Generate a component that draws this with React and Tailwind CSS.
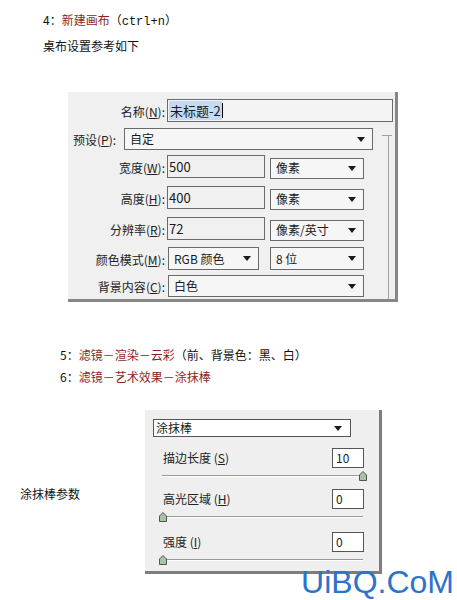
import React from 'react';

const cjk = { fontFamily: '"Noto Sans CJK SC", "Liberation Sans", sans-serif' };

const Arrow = () => (
  <svg width="8" height="5" viewBox="0 0 8 5" className="shrink-0">
    <path d="M0 0 H8 L4 5 Z" fill="#1a1a1a" />
  </svg>
);

const Select = ({ value, className }) => (
  <div className={`h-[21px] flex items-center justify-between border border-[#6a6a6a] bg-[#f6f6f6] pl-[5px] pr-[7px] text-[12px] text-[#1a1a1a] ${className}`}>
    <span>{value}</span>
    <Arrow />
  </div>
);

const Label = ({ text, k }) => (
  <span className="text-[12px] leading-[14px] text-[#222] relative top-[-1px]">
    {text}(<span className="underline">{k}</span>):
  </span>
);

const Thumb = () => (
  <svg width="8" height="10" viewBox="0 0 8 10">
    <path d="M4 0.5 L7.5 4 V9.5 H0.5 V4 Z" fill="#a9c2a9" stroke="#4a5a4a" strokeWidth="1" />
  </svg>
);

const Slider = ({ right, className }) => (
  <div className={`relative h-[10px] ml-[17px] w-[201px] ${className}`}>
    <div className="absolute left-0 right-0 top-[4px] h-[1px] bg-[#9a9a9a]" />
    <div className="absolute left-0 right-0 top-[5px] h-[1px] bg-white" />
    <div className={`absolute top-0 ${right ? 'right-[-4px]' : 'left-[-3px]'}`}>
      <Thumb />
    </div>
  </div>
);

const ParamRow = ({ label, k, value, className }) => (
  <div className={`flex items-center h-[20px] pl-[18px] ${className}`}>
    <span className="w-[169px] text-[12px] text-[#222]">
      {label} (<span className="underline">{k}</span>)
    </span>
    <div className="w-[32px] h-[20px] border border-[#555] bg-white pl-[3px] text-[12px] leading-[18px] text-[#222]">
      {value}
    </div>
  </div>
);

export default function App() {
  return (
    <div className="relative w-[457px] h-[600px] bg-white overflow-hidden" style={cjk}>
      <div className="pt-[8px] pl-[43px] text-[12px] leading-[24px] text-[#111]">
        <div>
          4：<span className="text-[#8e1f1f]">新建画布</span>（
          <span style={{ fontFamily: '"Liberation Mono", monospace' }}>ctrl+n</span>）
        </div>
        <div>桌布设置参考如下</div>
      </div>

      <div className="relative ml-[68px] mt-[34px] w-[330px] h-[210px] bg-[#f0f0f0] border-r-[3px] border-b-[3px] border-[#878787] pt-[7px]">
        <div className="absolute left-[320px] top-[43px] bottom-0 w-[1px] bg-[#a0a0a0]" />
        <div className="absolute left-[314px] top-[43px] w-[10px] h-[1px] bg-[#a0a0a0]" />

        <div className="flex items-center h-[23px]">
          <div className="w-[97px] text-right"><Label text="名称" k="N" /></div>
          <div className="ml-[2px] w-[226px] h-[23px] border border-[#6a6a6a] bg-[#f4f4f4] flex items-center pl-[1px] text-[13px] text-[#1a1a1a]">
            <span className="bg-[#c5dbf2] px-[1px]">未标题-2</span>
            <span className="w-[1px] h-[15px] bg-black" />
          </div>
        </div>

        <div className="flex items-center h-[22px] mt-[6px] pl-[5px]">
          <div className="w-[51px]"><Label text="预设" k="P" /></div>
          <Select value="自定" className="w-[249px] h-[22px]" />
        </div>

        <div className="flex items-center h-[23px] mt-[5px]">
          <div className="w-[97px] text-right"><Label text="宽度" k="W" /></div>
          <div className="ml-[2px] w-[98px] h-[23px] border border-[#6a6a6a] bg-[#f0f0f0] pl-[1px] text-[13px] leading-[21px] text-[#1a1a1a]">500</div>
          <Select value="像素" className="ml-[5px] w-[94px] mt-[3px]" />
        </div>

        <div className="flex items-center h-[23px] mt-[8px]">
          <div className="w-[97px] text-right"><Label text="高度" k="H" /></div>
          <div className="ml-[2px] w-[98px] h-[23px] border border-[#6a6a6a] bg-[#f0f0f0] pl-[1px] text-[13px] leading-[21px] text-[#1a1a1a]">400</div>
          <Select value="像素" className="ml-[5px] w-[94px] mt-[3px]" />
        </div>

        <div className="flex items-center h-[23px] mt-[8px]">
          <div className="w-[97px] text-right"><Label text="分辨率" k="R" /></div>
          <div className="ml-[2px] w-[98px] h-[23px] border border-[#6a6a6a] bg-[#f0f0f0] pl-[1px] text-[13px] leading-[21px] text-[#1a1a1a]">72</div>
          <Select value="像素/英寸" className="ml-[5px] w-[94px] mt-[3px]" />
        </div>

        <div className="flex items-center h-[23px] mt-[7px]">
          <div className="w-[97px] text-right"><Label text="颜色模式" k="M" /></div>
          <Select value="RGB 颜色" className="ml-[3px] w-[91px] h-[23px]" />
          <Select value="8 位" className="ml-[11px] w-[94px] h-[23px]" />
        </div>

        <div className="flex items-center h-[22px] mt-[5px]">
          <div className="w-[97px] text-right"><Label text="背景内容" k="C" /></div>
          <Select value="白色" className="ml-[3px] w-[196px] h-[22px]" />
        </div>
      </div>

      <div className="mt-[42px] pl-[60px] text-[12px] leading-[22px] text-[#111]">
        <div>
          5：<span className="text-[#8e1f1f]">滤镜－渲染－云彩</span>（前、背景色：黑、白）
        </div>
        <div>
          6：<span className="text-[#8e1f1f]">滤镜－艺术效果－涂抹棒</span>
        </div>
      </div>

      <div className="flex mt-[22px]">
        <div className="w-[145px] pl-[20px] flex items-center pt-[4px] text-[12px] text-[#111]">涂抹棒参数</div>
        <div className="w-[237px] h-[164px] bg-[#efefef] border-r-[3px] border-b-[3px] border-[#7d7d7d] pt-[9px]">
          <div className="ml-[8px] w-[198px] h-[18px] flex items-center justify-between border border-[#555] bg-white pl-[2px] pr-[8px] text-[12px] text-[#1a1a1a]">
            <span>涂抹棒</span>
            <Arrow />
          </div>
          <ParamRow label="描边长度" k="S" value="10" className="mt-[11px]" />
          <Slider right className="mt-[3px]" />
          <ParamRow label="高光区域" k="H" value="0" className="mt-[8px]" />
          <Slider className="mt-[3px]" />
          <ParamRow label="强度" k="I" value="0" className="mt-[10px]" />
          <Slider className="mt-[3px]" />
        </div>
      </div>

      <div
        className="absolute right-[3px] bottom-[1px] text-[32px] leading-[34px] text-[#2b74cc]"
        style={{ fontFamily: '"Liberation Sans", sans-serif' }}
      >
        UiBQ.CoM
      </div>
    </div>
  );
}
